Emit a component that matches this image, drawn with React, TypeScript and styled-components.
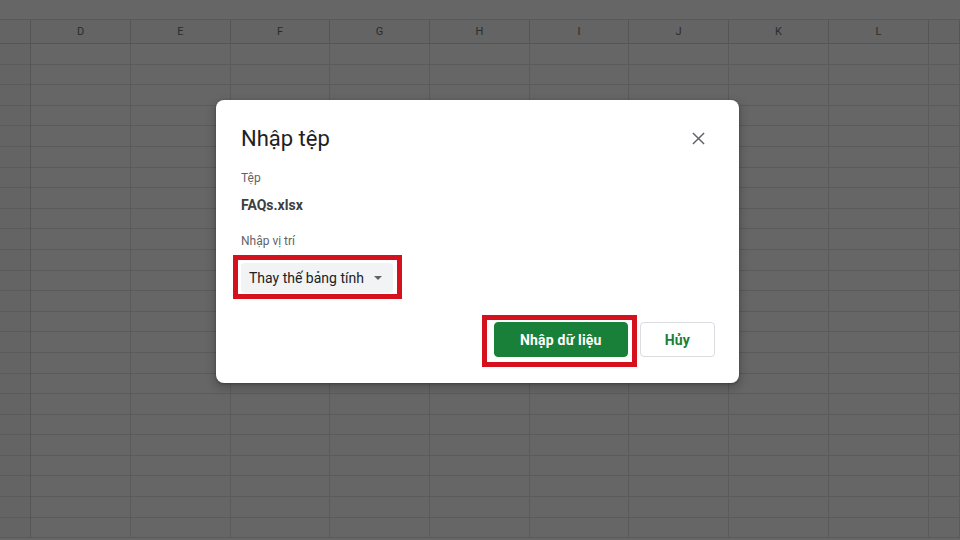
import styled, { createGlobalStyle } from 'styled-components'

const GlobalStyle = createGlobalStyle`
  html, body {
    margin: 0;
    padding: 0;
    width: 960px;
    height: 540px;
    overflow: hidden;
    background: #666666;
    font-family: Roboto, "Noto Sans", Arial, sans-serif;
  }
`

const columns = ['D', 'E', 'F', 'G', 'H', 'I', 'J', 'K', 'L', '']
const widths = [100, 100, 99, 100, 100, 99, 100, 100, 100, 31]
const rowCount = 24

const Page = styled.div`
  position: relative;
  width: 960px;
  height: 540px;
  overflow: hidden;
  background: #666666;
`

const TopBar = styled.div`
  height: 20px;
  background: #666666;
  border-bottom: 1px solid #595959;
  box-sizing: border-box;
`

const Sheet = styled.div`
  display: grid;
  grid-template-columns: 31px ${widths.map((w) => w + 'px').join(' ')};
`

const HeadCell = styled.div`
  height: 24px;
  box-sizing: border-box;
  border-right: 1px solid #555555;
  border-bottom: 1px solid #555555;
  background: #646464;
  color: #2b2c2d;
  font-size: 11px;
  display: flex;
  align-items: center;
  justify-content: center;
`

const Cell = styled.div<{ $first?: boolean }>`
  height: 20.6px;
  box-sizing: border-box;
  border-right: 1px solid ${(p) => (p.$first ? '#555555' : '#5b5b5b')};
  border-bottom: 1px solid #5b5b5b;
  background: ${(p) => (p.$first ? '#646464' : '#666666')};
`

const Overlay = styled.div`
  position: absolute;
  inset: 0;
  display: flex;
  justify-content: center;
  align-items: flex-start;
  padding-top: 100px;
  box-sizing: border-box;
`

const Dialog = styled.div`
  width: 523px;
  height: 283px;
  margin-left: -5px;
  background: #ffffff;
  border-radius: 8px;
  box-shadow: 0 4px 8px 3px rgba(0, 0, 0, 0.15), 0 1px 3px rgba(0, 0, 0, 0.3);
  box-sizing: border-box;
  padding: 24px 24px 0 25px;
  display: flex;
  flex-direction: column;
`

const Header = styled.div`
  display: flex;
  align-items: center;
  justify-content: space-between;
  height: 28px;
`

const Title = styled.h2`
  margin: 0;
  font-size: 22px;
  font-weight: 400;
  color: #202124;
  letter-spacing: 0;
`

const CloseButton = styled.button`
  width: 24px;
  height: 24px;
  margin-right: 5px;
  padding: 0;
  border: none;
  background: none;
  display: flex;
  align-items: center;
  justify-content: center;
  cursor: pointer;
`

const Label = styled.div<{ $top: number }>`
  font-size: 12px;
  color: #5f6368;
  line-height: 16px;
  margin-top: ${(p) => p.$top}px;
`

const FileName = styled.div`
  font-size: 14px;
  font-weight: 700;
  color: #3c4043;
  line-height: 20px;
  margin-top: 9px;
`

const SelectRow = styled.div`
  margin-top: 14px;
`

const Highlight = styled.div<{ $inset: string }>`
  position: relative;
  display: inline-block;

  &::after {
    content: '';
    position: absolute;
    inset: ${(p) => p.$inset};
    border: 5px solid #d4111c;
    pointer-events: none;
  }
`

const Select = styled.div`
  display: inline-flex;
  align-items: center;
  gap: 10px;
  height: 30px;
  padding: 0 11px 0 8px;
  background: #f1f3f4;
  border-radius: 4px;
  font-size: 14px;
  color: #202124;
`

const Caret = styled.span`
  width: 0;
  height: 0;
  border-left: 4px solid transparent;
  border-right: 4px solid transparent;
  border-top: 4px solid #5f6368;
`

const Footer = styled.div`
  display: flex;
  justify-content: flex-end;
  align-items: center;
  gap: 12px;
  margin-top: 29px;
`

const Button = styled.button<{ $primary?: boolean }>`
  height: 35px;
  border-radius: 4px;
  font-family: Roboto, Arial, sans-serif;
  font-size: 14px;
  font-weight: 700;
  letter-spacing: 0.2px;
  cursor: pointer;
  border: 1px solid ${(p) => (p.$primary ? '#188038' : '#dadce0')};
  background: ${(p) => (p.$primary ? '#188038' : '#ffffff')};
  color: ${(p) => (p.$primary ? '#ffffff' : '#188038')};
  padding: 0 ${(p) => (p.$primary ? '25px' : '24px')};
`

const App = () => {
  return (
    <Page>
      <GlobalStyle />
      <TopBar />
      <Sheet>
        <HeadCell />
        {columns.map((c, i) => (
          <HeadCell key={'h' + i}>{c}</HeadCell>
        ))}
        {Array.from({ length: rowCount }).map((_, r) => [
          <Cell key={'r' + r} $first />,
          ...columns.map((_c, i) => <Cell key={r + '-' + i} />),
        ])}
      </Sheet>

      <Overlay>
        <Dialog>
          <Header>
            <Title>Nhập tệp</Title>
            <CloseButton aria-label="Đóng">
              <svg width="13" height="13" viewBox="0 0 14 14">
                <path d="M1 1 L13 13 M13 1 L1 13" stroke="#5f6368" strokeWidth="1.6" />
              </svg>
            </CloseButton>
          </Header>
          <Label $top={18}>Tệp</Label>
          <FileName>FAQs.xlsx</FileName>
          <Label $top={18}>Nhập vị trí</Label>
          <SelectRow>
            <Highlight $inset="-8px -9px -6px -8px">
              <Select>
                Thay thế bảng tính
                <Caret />
              </Select>
            </Highlight>
          </SelectRow>
          <Footer>
            <Highlight $inset="-7px -9px -10px -12px">
              <Button $primary>Nhập dữ liệu</Button>
            </Highlight>
            <Button>Hủy</Button>
          </Footer>
        </Dialog>
      </Overlay>
    </Page>
  )
}

export default App
